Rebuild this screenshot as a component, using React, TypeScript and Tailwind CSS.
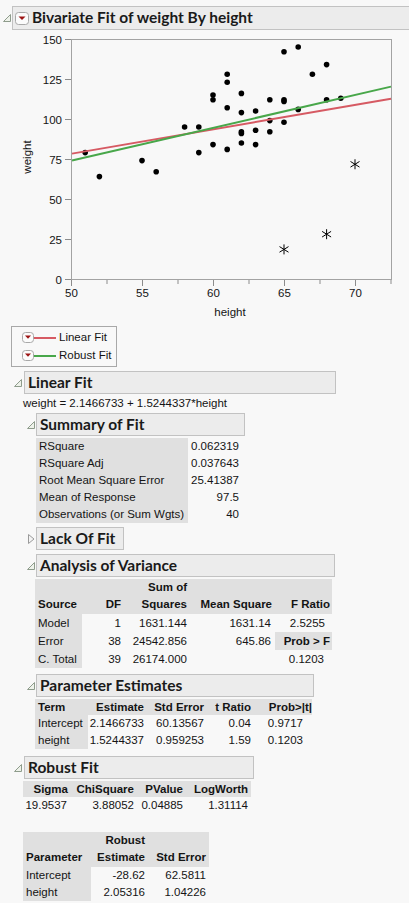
import React from "react";

// ---------------------------------------------------------------
// Bivariate Fit report — weight by height, linear + robust fits
// ---------------------------------------------------------------

const px = (h: number) => 71 + (h - 50) * 14.2;
const py = (w: number) => 279 - w * 1.6;

const POINTS: [number, number][] = [
  [51, 79], [52, 64], [55, 74], [56, 67], [58, 95], [59, 95], [59, 79],
  [60, 115], [60, 112], [60, 84], [61, 128], [61, 123], [61, 107], [61, 81],
  [62, 116], [62, 104], [62, 92], [62, 91], [62, 85], [63, 105], [63, 93],
  [63, 84], [64, 112], [64, 99], [64, 92], [65, 142], [65, 112], [65, 111],
  [65, 98], [66, 145], [66, 106], [67, 128], [68, 134], [68, 112], [69, 113],
];
const EXCLUDED: [number, number][] = [[65, 18.5], [68, 28], [70, 71.7]];

const AXIS_FONT = "'Liberation Sans', Arial, sans-serif";

const OpenTriangle = () => (
  <svg width="8" height="8" viewBox="0 0 8 8" className="shrink-0">
    <path d="M7.5 0.5 L7.5 7.5 L0.5 7.5 Z" fill="#eef2ea" stroke="#8e9c8c" />
  </svg>
);

const ClosedTriangle = () => (
  <svg width="7" height="10" viewBox="0 0 7 10" className="shrink-0">
    <path d="M0.5 0.5 L6 5 L0.5 9.5 Z" fill="#f4f4f4" stroke="#9a9a9a" />
  </svg>
);

const MenuButton = ({ small }: { small?: boolean }) =>
  small ? (
    <svg width="12" height="11" viewBox="0 0 12 11" className="shrink-0">
      <rect x="0.5" y="0.5" width="11" height="10" rx="3" fill="#fbfbfb" stroke="#a8a8a8" />
      <path d="M3 3.5 L9 3.5 L6 6.8 Z" fill="#9c1414" />
    </svg>
  ) : (
    <svg width="14" height="13" viewBox="0 0 14 13" className="shrink-0">
      <rect x="0.5" y="0.5" width="13" height="12" rx="3" fill="#fbfbfb" stroke="#a8a8a8" />
      <path d="M3.5 4.5 L10.5 4.5 L7 8 Z" fill="#9c1414" />
    </svg>
  );

const HeaderBox = ({ title, width }: { title: string; width: string }) => (
  <div
    className={`${width} h-[23px] border border-[#c2c2c2] bg-[#ececec] flex items-center pl-[3px] font-[Lato,sans-serif] text-[15.5px] font-bold text-[#1a1a1a] whitespace-nowrap`}
  >
    {title}
  </div>
);

const Chart = () => (
  <svg width="409" height="290" viewBox="0 30 409 290" className="block" fontFamily={AXIS_FONT}>
    {/* frame */}
    <rect x="71.5" y="39.5" width="320" height="240" fill="none" stroke="#a3a3a3" />
    {/* y ticks */}
    {[0, 25, 50, 75, 100, 125, 150].map((v) => (
      <g key={v}>
        <line x1="65" x2="71" y1={py(v) + 0.5} y2={py(v) + 0.5} stroke="#8c8c8c" />
        <text x="62" y={py(v) + 4.5} textAnchor="end" fontSize="11.5" fill="#141414">
          {v}
        </text>
      </g>
    ))}
    {/* x ticks */}
    {[50, 55, 60, 65, 70].map((v) => (
      <g key={v}>
        <line x1={px(v) + 0.5} x2={px(v) + 0.5} y1="280" y2="286" stroke="#8c8c8c" />
        <text x={px(v) + 0.5} y="297" textAnchor="middle" fontSize="11.5" fill="#141414">
          {v}
        </text>
      </g>
    ))}
    {[52.5, 57.5, 62.5, 67.5, 72.5].map((v) => (
      <line key={v} x1={px(v) + 0.5} x2={px(v) + 0.5} y1="280" y2="284" stroke="#8c8c8c" />
    ))}
    <text x="230" y="316" textAnchor="middle" fontSize="11.5" fill="#141414">
      height
    </text>
    <text
      x="0"
      y="0"
      transform="translate(31 157) rotate(-90)"
      textAnchor="middle"
      fontSize="11.5"
      fill="#141414"
    >
      weight
    </text>
    {/* points */}
    {POINTS.map(([h, w], i) => (
      <circle key={i} cx={px(h)} cy={py(w)} r="2.8" fill="#000" />
    ))}
    {EXCLUDED.map(([h, w], i) => (
      <g key={i} transform={`translate(${px(h)} ${py(w)})`} stroke="#000" strokeWidth="1">
        <line x1="0" y1="-5" x2="0" y2="5" />
        <line x1="-4.5" y1="-2.8" x2="4.5" y2="2.8" />
        <line x1="-4.5" y1="2.8" x2="4.5" y2="-2.8" />
      </g>
    ))}
    {/* fits */}
    <line
      x1="72"
      y1={py(2.1466733 + 1.5244337 * 50)}
      x2="391"
      y2={py(2.1466733 + 1.5244337 * 72.5)}
      stroke="#d65a63"
      strokeWidth="2"
    />
    <line
      x1="72"
      y1={py(-28.62 + 2.05316 * 50)}
      x2="391"
      y2={py(-28.62 + 2.05316 * 72.5)}
      stroke="#48a74a"
      strokeWidth="2"
    />
  </svg>
);

const Cell = ({
  w,
  children,
  gray,
  left,
  bold,
  pr = "pr-[2px]",
}: {
  w: string;
  children?: React.ReactNode;
  gray?: boolean;
  left?: boolean;
  bold?: boolean;
  pr?: string;
}) => (
  <div
    className={`${w} shrink-0 whitespace-nowrap ${left ? "pl-[3px] text-left" : `${pr} text-right`} ${
      gray ? "bg-[#e0e0e0]" : ""
    } ${bold ? "font-bold" : ""}`}
  >
    {children}
  </div>
);

export default function App() {
  return (
    <div className="w-[409px] min-h-[903px] overflow-hidden bg-[#f8f8f8] text-[#141414] font-['Liberation_Sans',Arial,sans-serif] text-[11.5px]">
      {/* Bivariate header */}
      <div className="flex items-center pl-[3px] pt-[6px]">
        <OpenTriangle />
        <div className="ml-[1px] flex-1 mr-[-6px] h-[24px] border border-[#c2c2c2] bg-[#ececec] flex items-center pl-[2px]">
          <MenuButton />
          <span className="ml-[3px] font-[Lato,sans-serif] text-[15.5px] font-bold text-[#1a1a1a]">
            Bivariate Fit of weight By height
          </span>
        </div>
      </div>

      <Chart />

      {/* Legend */}
      <div className="ml-[11px] mt-[6px] w-[106px] h-[41px] border border-[#a8a8a8] flex flex-col justify-center gap-[2px] pl-[10px] whitespace-nowrap">
        <div className="flex items-center h-[16px]">
          <MenuButton small />
          <div className="w-[22px] h-[2px] bg-[#d65a63]" />
          <span className="ml-[3px]">Linear Fit</span>
        </div>
        <div className="flex items-center h-[16px]">
          <MenuButton small />
          <div className="w-[22px] h-[2px] bg-[#48a74a]" />
          <span className="ml-[3px]">Robust Fit</span>
        </div>
      </div>

      {/* Linear Fit */}
      <div className="flex items-center pl-[14px] mt-[4px]">
        <OpenTriangle />
        <div className="ml-[2px]">
          <HeaderBox title="Linear Fit" width="w-[312px]" />
        </div>
      </div>
      <div className="pl-[23px] h-[19px] leading-[19px]">weight = 2.1466733 + 1.5244337*height</div>

      {/* Summary of Fit */}
      <div className="flex items-center pl-[27px]">
        <OpenTriangle />
        <div className="ml-[1px]">
          <HeaderBox title="Summary of Fit" width="w-[209px]" />
        </div>
      </div>
      <div className="ml-[36px] mt-[2px]">
        {[
          ["RSquare", "0.062319"],
          ["RSquare Adj", "0.037643"],
          ["Root Mean Square Error", "25.41387"],
          ["Mean of Response", "97.5"],
          ["Observations (or Sum Wgts)", "40"],
        ].map(([k, v]) => (
          <div key={k} className="flex h-[17px] leading-[17px]">
            <Cell w="w-[152px]" gray left>
              {k}
            </Cell>
            <Cell w="w-[51px]" pr="pr-[0px]">
              {v}
            </Cell>
          </div>
        ))}
      </div>

      {/* Lack Of Fit */}
      <div className="flex items-center pl-[28px] mt-[4px]">
        <ClosedTriangle />
        <div className="ml-[1px]">
          <HeaderBox title="Lack Of Fit" width="w-[88px]" />
        </div>
      </div>

      {/* Analysis of Variance */}
      <div className="flex items-center pl-[27px] mt-[4px]">
        <OpenTriangle />
        <div className="ml-[1px]">
          <HeaderBox title="Analysis of Variance" width="w-[299px]" />
        </div>
      </div>
      <div className="ml-[35px] mt-[2px]">
        <div className="flex items-end w-[297px] h-[35px] bg-[#e0e0e0] font-bold leading-[17px] pb-[1px]">
          <Cell w="w-[47px]" left>
            Source
          </Cell>
          <Cell w="w-[42px]" pr="pr-[3px]">
            DF
          </Cell>
          <Cell w="w-[65px]">
            <div>Sum of</div>
            <div>Squares</div>
          </Cell>
          <Cell w="w-[85px]">Mean Square</Cell>
          <Cell w="w-[58px]">F Ratio</Cell>
        </div>
        {[
          ["Model", "1", "1631.144", "1631.14"],
          ["Error", "38", "24542.856", "645.86"],
          ["C. Total", "39", "26174.000", ""],
        ].map(([s, df, ss, ms], i) => (
          <div key={s} className="flex h-[18px] leading-[18px]">
            <Cell w="w-[47px]" gray left>
              {s}
            </Cell>
            <Cell w="w-[42px]" pr="pr-[3px]">
              {df}
            </Cell>
            <Cell w="w-[65px]">{ss}</Cell>
            <Cell w="w-[85px]" pr="pr-[3px]">
              {ms}
            </Cell>
            {i === 0 && (
              <Cell w="w-[58px]" pr="pr-[7px]">
                2.5255
              </Cell>
            )}
            {i === 1 && (
              <div className="w-[57px] ml-[1px] bg-[#e0e0e0] font-bold text-right pr-[2px] whitespace-nowrap">
                Prob &gt; F
              </div>
            )}
            {i === 2 && (
              <Cell w="w-[58px]" pr="pr-[8px]">
                0.1203
              </Cell>
            )}
          </div>
        ))}
      </div>

      {/* Parameter Estimates */}
      <div className="flex items-center pl-[27px] mt-[6px]">
        <OpenTriangle />
        <div className="ml-[1px]">
          <HeaderBox title="Parameter Estimates" width="w-[278px]" />
        </div>
      </div>
      <div className="ml-[35px] mt-[2px]">
        <div className="flex w-[277px] h-[16px] leading-[16px] bg-[#e0e0e0] font-bold">
          <Cell w="w-[53px]" left>
            Term
          </Cell>
          <Cell w="w-[58px]">Estimate</Cell>
          <Cell w="w-[60px]">Std Error</Cell>
          <Cell w="w-[47px]">t Ratio</Cell>
          <Cell w="w-[59px]" pr="pr-[0px]">
            Prob&gt;|t|
          </Cell>
        </div>
        {[
          ["Intercept", "2.1466733", "60.13567", "0.04", "0.9717"],
          ["height", "1.5244337", "0.959253", "1.59", "0.1203"],
        ].map(([t, e, se, tr, p]) => (
          <div key={t} className="flex h-[17px] leading-[17px]">
            <Cell w="w-[53px]" gray left>
              {t}
            </Cell>
            <Cell w="w-[58px]">{e}</Cell>
            <Cell w="w-[60px]">{se}</Cell>
            <Cell w="w-[47px]">{tr}</Cell>
            <Cell w="w-[59px]" pr="pr-[9px]">
              {p}
            </Cell>
          </div>
        ))}
      </div>

      {/* Robust Fit */}
      <div className="flex items-center pl-[14px] mt-[7px]">
        <OpenTriangle />
        <div className="ml-[2px]">
          <HeaderBox title="Robust Fit" width="w-[230px]" />
        </div>
      </div>
      <div className="ml-[23px] mt-[2px]">
        <div className="flex w-[228px] h-[16px] leading-[16px] bg-[#e0e0e0] font-bold">
          <Cell w="w-[47px]">Sigma</Cell>
          <Cell w="w-[66px]">ChiSquare</Cell>
          <Cell w="w-[49px]">PValue</Cell>
          <Cell w="w-[66px]" pr="pr-[3px]">
            LogWorth
          </Cell>
        </div>
        <div className="flex h-[17px] leading-[17px]">
          <Cell w="w-[47px]" pr="pr-[3px]">
            19.9537
          </Cell>
          <Cell w="w-[66px]">3.88052</Cell>
          <Cell w="w-[49px]">0.04885</Cell>
          <Cell w="w-[66px]" pr="pr-[3px]">
            1.31114
          </Cell>
        </div>
      </div>
      <div className="ml-[23px] mt-[18px]">
        <div className="flex items-end w-[186px] h-[35px] bg-[#e0e0e0] font-bold leading-[17px] pb-[1px]">
          <Cell w="w-[68px]" left>
            Parameter
          </Cell>
          <Cell w="w-[57px]" pr="pr-[3px]">
            <div>Robust</div>
            <div>Estimate</div>
          </Cell>
          <Cell w="w-[61px]" pr="pr-[3px]">
            Std Error
          </Cell>
        </div>
        {[
          ["Intercept", "-28.62", "62.5811"],
          ["height", "2.05316", "1.04226"],
        ].map(([p, e, se]) => (
          <div key={p} className="flex h-[17px] leading-[17px]">
            <Cell w="w-[68px]" gray left>
              {p}
            </Cell>
            <Cell w="w-[57px]" pr="pr-[3px]">
              {e}
            </Cell>
            <Cell w="w-[61px]" pr="pr-[3px]">
              {se}
            </Cell>
          </div>
        ))}
      </div>
    </div>
  );
}
